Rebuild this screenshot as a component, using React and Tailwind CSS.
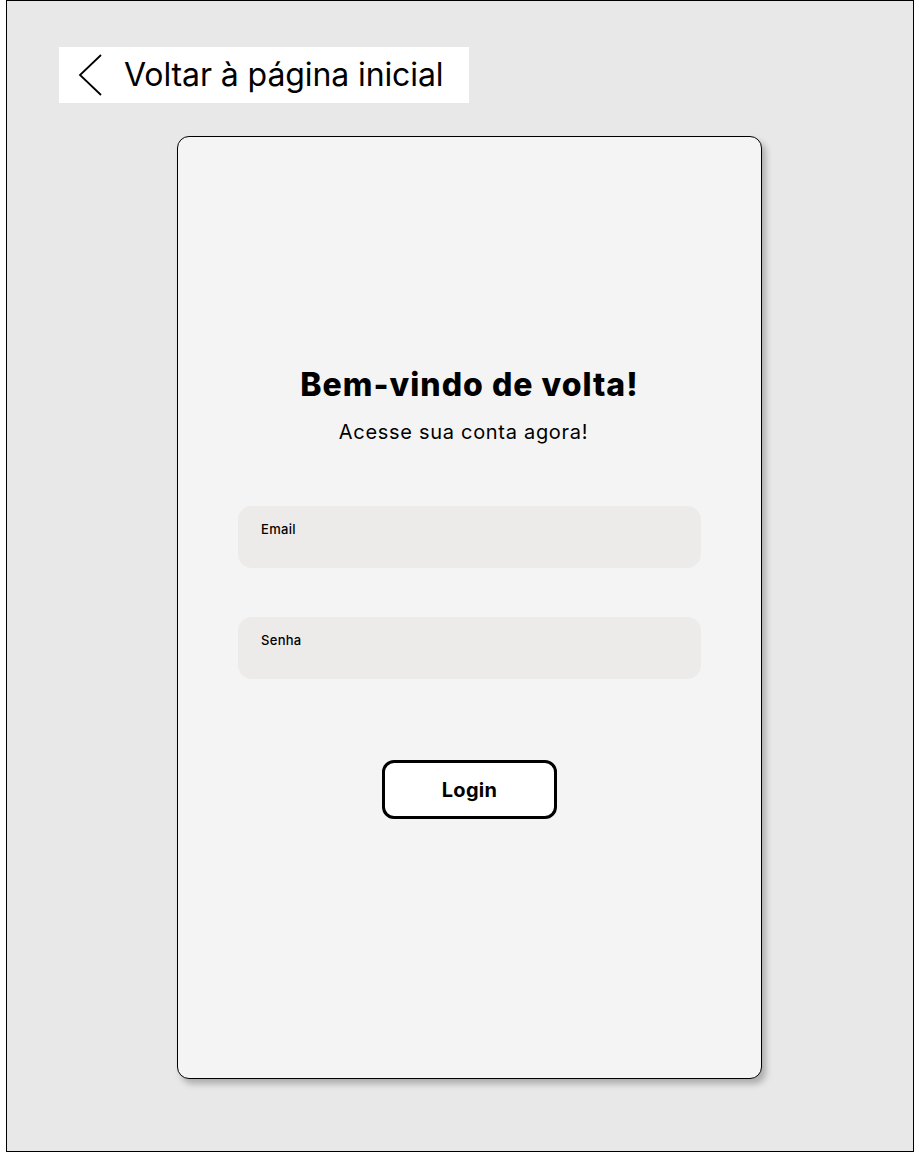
export default function App() {
  return (
    <div className="min-h-screen bg-white">
      <div
        className="ml-[6px] w-[908px] h-[1152px] border border-black bg-[#e8e8e8] pt-[46px]"
        style={{ fontFamily: 'Inter, "Noto Sans", sans-serif' }}
      >
        <div className="ml-[52px] flex h-[56px] w-[410px] items-center bg-white pl-[18px]">
          <svg width="26" height="42" viewBox="0 0 26 42" fill="none" className="shrink-0">
            <path d="M24 1 L3 21 L24 41" stroke="black" strokeWidth="1.8" />
          </svg>
          <span className="ml-[21px] text-[32px] leading-none tracking-[-0.1px] text-black">Voltar à página inicial</span>
        </div>

        <div className="ml-[170px] mt-[33px] flex h-[943px] w-[585px] flex-col items-center rounded-[12px] border border-black bg-[#f4f4f4] pt-[230px] shadow-[4px_5px_6px_rgba(0,0,0,0.25)]">
          <h1 className="text-[32px] font-extrabold leading-[36px] tracking-[1px] text-black">Bem-vindo de volta!</h1>
          <p className="mt-[16px] pr-[12px] text-[20px] leading-[26px] tracking-[0.7px] text-black">Acesse sua conta agora!</p>

          <div className="mt-[61px] flex w-[463px] flex-col gap-[49px]">
            <div className="h-[62px] rounded-[14px] bg-[#edebe9] pl-[23px] pt-[15px] text-[13px] font-medium leading-[16px] tracking-[0.3px] text-black">
              Email
            </div>
            <div className="h-[62px] rounded-[14px] bg-[#edebe9] pl-[23px] pt-[15px] text-[13px] font-medium leading-[16px] tracking-[0.3px] text-black">
              Senha
            </div>
          </div>

          <button className="mt-[81px] flex h-[59px] w-[175px] items-center justify-center rounded-[12px] border-[3px] border-black bg-white text-[20px] font-bold tracking-[0.3px] text-black">
            Login
          </button>
        </div>
      </div>
    </div>
  );
}
